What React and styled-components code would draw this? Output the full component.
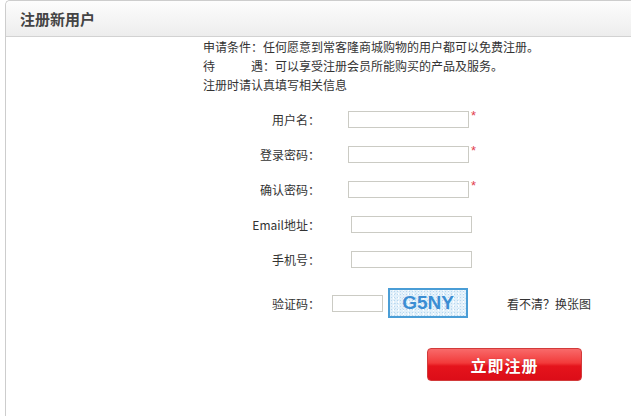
import React from "react";
import styled, { createGlobalStyle } from "styled-components";

const GlobalStyle = createGlobalStyle`
  html, body {
    margin: 0;
    padding: 0;
    background: #fff;
    overflow: hidden;
  }
  body {
    font-family: "Noto Sans CJK SC", "DejaVu Sans", sans-serif;
    font-size: 12px;
    color: #333;
  }
`;

const Panel = styled.div`
  margin-left: 5px;
  width: 640px;
  height: 416px;
  border: 1px solid #cdcdcd;
  border-right: none;
  border-bottom: none;
  border-top-left-radius: 5px;
  background: #fff;
  box-sizing: border-box;
`;

const Header = styled.div`
  height: 35px;
  padding-left: 14px;
  display: flex;
  align-items: center;
  background: linear-gradient(#fdfdfd, #ededed);
  border-bottom: 1px solid #d2d2d2;
  border-top-left-radius: 5px;
  font-size: 15px;
  font-weight: bold;
  color: #444;
`;

const Body = styled.div`
  padding-left: 197px;
`;

const Intro = styled.div`
  line-height: 19px;
  color: #333;
`;

const Spaced = styled.span`
  display: inline-block;
  width: 36px;
`;

const Form = styled.div`
  margin-top: 8px;
`;

const Row = styled.div`
  display: flex;
  align-items: center;
  height: ${(p) => p.$height || 35}px;
  margin-top: ${(p) => p.$top || 0}px;
`;

const Label = styled.label`
  width: 117px;
  text-align: right;
  color: #333;
`;

const Input = styled.input`
  box-sizing: border-box;
  width: ${(p) => p.$width || 121}px;
  height: 17px;
  margin: 0 0 0 ${(p) => p.$offset}px;
  padding: 0 3px;
  border: 1px solid #cbcbc4;
  background: #fff;
  outline: none;
`;

const Star = styled.span`
  color: #e2404f;
  font-family: "Liberation Sans", Arial, sans-serif;
  font-size: 13px;
  margin-left: 2px;
  margin-bottom: 8px;
`;

const Captcha = styled.div`
  box-sizing: border-box;
  width: 80px;
  height: 30px;
  margin-left: 5px;
  border: 2px solid #4a9dd6;
  display: flex;
  align-items: center;
  justify-content: center;
  background-color: #e2f0fa;
  background-image:
    radial-gradient(#b7d7ef 0.7px, transparent 1px),
    radial-gradient(#ffffff 0.9px, transparent 1px),
    radial-gradient(#c6e0f3 0.7px, transparent 1px);
  background-size: 3px 3px, 5px 4px, 7px 5px;
  background-position: 0 0, 1px 2px, 2px 1px;
  font-family: "Liberation Sans", Arial, sans-serif;
  font-weight: bold;
  font-size: 19px;
  color: #3b8dd3;
`;

const Refresh = styled.a`
  margin-left: 39px;
  color: #333;
  text-decoration: none;
  cursor: pointer;
`;

const Actions = styled.div`
  margin-top: 29px;
  padding-left: 224px;
`;

const Submit = styled.button`
  box-sizing: border-box;
  width: 155px;
  height: 33px;
  border: 1px solid #d23a3a;
  border-radius: 4px;
  background: linear-gradient(#f86a6a 0%, #f23a3a 45%, #e5141c 55%, #dc0d18 100%);
  color: #fff;
  font-family: "Noto Sans CJK SC", serif;
  font-size: 16px;
  font-weight: bold;
  letter-spacing: 1px;
  text-shadow: 0 0 1px rgba(120, 0, 0, 0.5);
  cursor: pointer;
`;

const fields = [
  { label: "用户名：", offset: 28, required: true },
  { label: "登录密码：", offset: 28, required: true, type: "password" },
  { label: "确认密码：", offset: 28, required: true, type: "password" },
  { label: "Email地址：", offset: 31 },
  { label: "手机号：", offset: 31 },
];

export default function App() {
  return (
    <>
      <GlobalStyle />
      <Panel>
        <Header>注册新用户</Header>
        <Body>
          <Intro>
            <div>申请条件：任何愿意到常客隆商城购物的用户都可以免费注册。</div>
            <div>
              待<Spaced />遇：可以享受注册会员所能购买的产品及服务。
            </div>
            <div>注册时请认真填写相关信息</div>
          </Intro>
          <Form>
            {fields.map((f) => (
              <Row key={f.label}>
                <Label>{f.label}</Label>
                <Input type={f.type || "text"} $offset={f.offset} />
                {f.required && <Star>*</Star>}
              </Row>
            ))}
            <Row $height={32} $top={10}>
              <Label>验证码：</Label>
              <Input $offset={12} $width={51} />
              <Captcha>G5NY</Captcha>
              <Refresh>看不清？换张图</Refresh>
            </Row>
          </Form>
          <Actions>
            <Submit>立即注册</Submit>
          </Actions>
        </Body>
      </Panel>
    </>
  );
}
